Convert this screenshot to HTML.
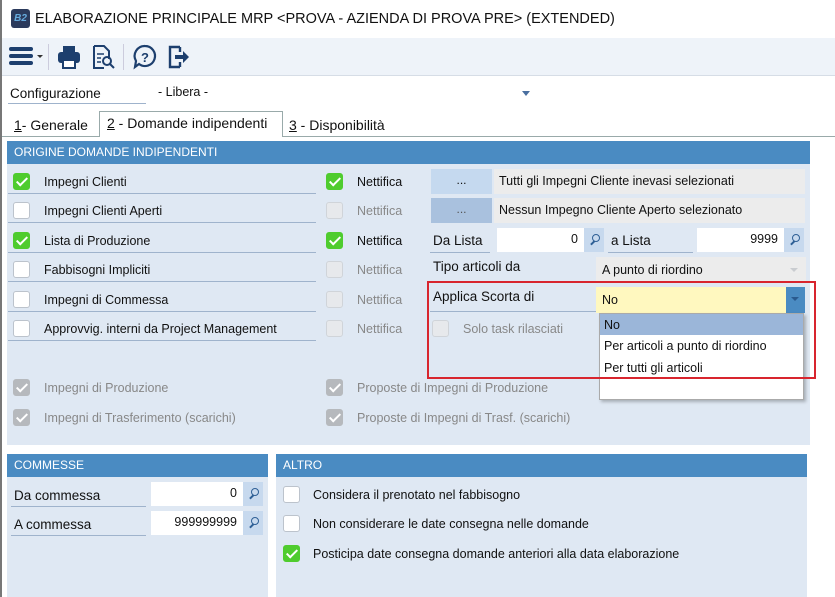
<!DOCTYPE html>
<html><head><meta charset="utf-8"><style>
*{box-sizing:border-box;margin:0;padding:0}
body{width:835px;height:597px;position:relative;background:#fff;font-family:"Liberation Sans",Arial,sans-serif;font-size:13px;color:#111;overflow:hidden}
.a{position:absolute}
.t{position:absolute;font-size:12.5px;white-space:nowrap}
.hdr{position:absolute;background:#4a8bc2;color:#fff;font-size:12px;padding:4px 7px;height:23px}
.pan{position:absolute;background:#dfe8f3}
.cb{position:absolute;width:17px;height:17px;border:1px solid #bcc3cc;border-radius:3px;background:#fff}
.cb.g{background:#e7e9ec;border-color:#d0d4d9}
.cb.on{background:#4fcc2e;border-color:#4fcc2e}
.cb.dis{background:#b6b9bd;border-color:#b6b9bd}
.cb.on::after,.cb.dis::after{content:"";position:absolute;left:5px;top:1px;width:4px;height:9px;border:solid #fff;border-width:0 2px 2px 0;transform:rotate(45deg)}
.ul{position:absolute;height:1px;background:#9fb3cc}
.gray{color:#888}
.fld{position:absolute;background:#fff;height:24px;text-align:right;padding:4px 6px;font-size:12.5px}
.mag{position:absolute;width:20px;height:24px;background:#c7d9ee}
.mag::after{content:"";position:absolute;left:8px;top:6px;width:6px;height:6px;border:1.5px solid #2e5f95;border-radius:50%}
.mag::before{content:"";position:absolute;left:6px;top:14px;width:5px;height:1.5px;background:#2e5f95;transform:rotate(-45deg)}
</style></head><body>
<div class="a" style="left:0;top:0;width:2px;height:597px;background:#777"></div>
<!-- title -->
<div class="a" style="left:11px;top:9px;width:19px;height:19px;background:#2b3a5c;border-radius:3px;color:#6ad;font-size:10px;font-weight:bold;font-style:italic;text-align:center;line-height:19px">B2</div>
<div class="t" style="left:35px;top:11px;font-size:14.5px">ELABORAZIONE PRINCIPALE MRP &lt;PROVA - AZIENDA DI PROVA PRE&gt; (EXTENDED)</div>
<!-- toolbar -->
<div class="a" style="left:2px;top:38px;width:833px;height:38px;background:#eef3f9;border-bottom:1px solid #d6dde6"></div>
<div class="a" style="left:9px;top:47px;width:24px;height:4px;background:#1d3f6e;border-radius:2px"></div>
<div class="a" style="left:9px;top:54px;width:24px;height:4px;background:#1d3f6e;border-radius:2px"></div>
<div class="a" style="left:9px;top:61px;width:24px;height:4px;background:#1d3f6e;border-radius:2px"></div>
<div class="a" style="left:37px;top:55px;border:3px solid transparent;border-top:3px solid #333"></div>
<div class="a" style="left:48px;top:44px;width:1px;height:26px;background:#ccd"></div>
<svg class="a" style="left:56px;top:44px" width="26" height="26" viewBox="0 0 26 26"><rect x="7" y="2" width="12" height="6" fill="#1d3f6e"/><rect x="2" y="8" width="22" height="11" rx="3" fill="#1d3f6e"/><rect x="7" y="16" width="12" height="8" fill="#fff" stroke="#1d3f6e" stroke-width="2"/></svg>
<svg class="a" style="left:90px;top:44px" width="26" height="26" viewBox="0 0 26 26"><path d="M4 2h10l5 5v8M4 2v22h10" fill="none" stroke="#1d3f6e" stroke-width="2"/><path d="M7 10h7M7 14h4M7 18h4" stroke="#1d3f6e" stroke-width="1.5"/><circle cx="17" cy="17" r="4" fill="none" stroke="#1d3f6e" stroke-width="2"/><path d="M20 20l4 4" stroke="#1d3f6e" stroke-width="2"/></svg>
<div class="a" style="left:123px;top:44px;width:1px;height:26px;background:#ccd"></div>
<svg class="a" style="left:131px;top:43px" width="28" height="28" viewBox="0 0 28 28"><path d="M14 3a10 10 0 1 1-6 18l-4 3 1-6A10 10 0 0 1 14 3z" fill="none" stroke="#1d3f6e" stroke-width="2.2"/><text x="14" y="19" font-size="13" font-weight="bold" text-anchor="middle" fill="#1d3f6e" font-family="Liberation Sans">?</text></svg>
<svg class="a" style="left:166px;top:44px" width="26" height="26" viewBox="0 0 26 26"><path d="M14 3H4v20h10M14 3v5M14 18v5" fill="none" stroke="#1d3f6e" stroke-width="2.4"/><path d="M9 11h8V7l6 6-6 6v-4H9z" fill="#1d3f6e"/></svg>
<!-- config -->
<div class="t" style="left:10px;top:86px;font-size:13.5px">Configurazione</div>
<div class="ul" style="left:8px;top:103px;width:138px"></div>
<div class="a" style="left:150px;top:80px;width:384px;height:25px;background:#fff"></div>
<div class="t" style="left:158px;top:85px">- Libera -</div>
<div class="a" style="left:522px;top:91px;border:4px solid transparent;border-top:5px solid #4a6fa0"></div>
<!-- tabs -->
<div class="a" style="left:2px;top:136px;width:833px;height:1px;background:#9aa"></div>
<div class="a" style="left:99px;top:111px;width:184px;height:26px;background:#fff;border:1px solid #9aa;border-bottom:none"></div>
<div class="t" style="left:14px;top:117px;font-size:14px"><u>1</u>- Generale</div>
<div class="t" style="left:107px;top:115px;font-size:14px"><u>2</u> - Domande indipendenti</div>
<div class="t" style="left:289px;top:117px;font-size:14px"><u>3</u> - Disponibilità</div>
<!-- origine panel -->
<div class="pan" style="left:7px;top:141px;width:803px;height:304px"></div>
<div class="hdr" style="left:7px;top:141px;width:803px">ORIGINE DOMANDE INDIPENDENTI</div>

<div class="cb on" style="left:13px;top:173px"></div><div class="t" style="left:44px;top:175px">Impegni Clienti</div><div class="ul" style="left:8px;top:193px;width:308px"></div>
<div class="cb" style="left:13px;top:202px"></div><div class="t" style="left:44px;top:204px">Impegni Clienti Aperti</div><div class="ul" style="left:8px;top:222px;width:308px"></div>
<div class="cb on" style="left:13px;top:232px"></div><div class="t" style="left:44px;top:234px">Lista di Produzione</div><div class="ul" style="left:8px;top:252px;width:308px"></div>
<div class="cb" style="left:13px;top:261px"></div><div class="t" style="left:44px;top:263px">Fabbisogni Impliciti</div><div class="ul" style="left:8px;top:281px;width:308px"></div>
<div class="cb" style="left:13px;top:291px"></div><div class="t" style="left:44px;top:293px">Impegni di Commessa</div><div class="ul" style="left:8px;top:311px;width:308px"></div>
<div class="cb" style="left:13px;top:320px"></div><div class="t" style="left:44px;top:322px">Approvvig. interni da Project Management</div><div class="ul" style="left:8px;top:340px;width:308px"></div>

<div class="cb on" style="left:326px;top:173px"></div><div class="t" style="left:357px;top:175px">Nettifica</div>
<div class="cb g" style="left:326px;top:202px"></div><div class="t gray" style="left:357px;top:204px">Nettifica</div>
<div class="cb on" style="left:326px;top:232px"></div><div class="t" style="left:357px;top:234px">Nettifica</div>
<div class="cb g" style="left:326px;top:261px"></div><div class="t gray" style="left:357px;top:263px">Nettifica</div>
<div class="cb g" style="left:326px;top:291px"></div><div class="t gray" style="left:357px;top:293px">Nettifica</div>
<div class="cb g" style="left:326px;top:320px"></div><div class="t gray" style="left:357px;top:322px">Nettifica</div>

<div class="a" style="left:431px;top:169px;width:61px;height:25px;background:#c5d9ef;text-align:center;font-size:12px;line-height:22px">...</div>
<div class="a" style="left:494px;top:169px;width:311px;height:25px;background:#ececec"></div>
<div class="t" style="left:499px;top:174px">Tutti gli Impegni Cliente inevasi selezionati</div>
<div class="a" style="left:431px;top:198px;width:61px;height:25px;background:#a9c1de;text-align:center;font-size:12px;line-height:22px;color:#555">...</div>
<div class="a" style="left:494px;top:198px;width:311px;height:25px;background:#ececec"></div>
<div class="t" style="left:499px;top:203px">Nessun Impegno Cliente Aperto selezionato</div>

<div class="t" style="left:433px;top:233px;font-size:13.5px">Da Lista</div><div class="ul" style="left:430px;top:252px;width:60px"></div>
<div class="fld" style="left:497px;top:228px;width:87px">0</div><div class="mag" style="left:584px;top:228px"></div>
<div class="t" style="left:611px;top:233px;font-size:13.5px">a Lista</div><div class="ul" style="left:608px;top:252px;width:85px"></div>
<div class="fld" style="left:697px;top:228px;width:87px">9999</div><div class="mag" style="left:784px;top:228px"></div>

<div class="t" style="left:433px;top:259px;font-size:13.5px">Tipo articoli da</div>
<div class="a" style="left:596px;top:257px;width:210px;height:25px;background:#ececec"></div>
<div class="t" style="left:602px;top:263px">A punto di riordino</div>
<div class="a" style="left:790px;top:268px;border:4px solid transparent;border-top:4px solid #c9ccd0"></div>

<div class="t" style="left:433px;top:289px;font-size:13.5px">Applica Scorta di</div><div class="ul" style="left:430px;top:311px;width:168px"></div>
<div class="a" style="left:596px;top:287px;width:190px;height:26px;background:#fff8bf"></div>
<div class="t" style="left:602px;top:293px">No</div>
<div class="a" style="left:786px;top:287px;width:19px;height:26px;background:#4a8bc2"></div>
<div class="a" style="left:791px;top:297px;border:4px solid transparent;border-top:4px solid #2a5a8e"></div>

<div class="cb g" style="left:432px;top:320px"></div><div class="t gray" style="left:463px;top:322px">Solo task rilasciati</div>

<div class="a" style="left:599px;top:313px;width:205px;height:87px;background:#fff;border:1px solid #aaa;box-shadow:2px 2px 3px rgba(0,0,0,.25)"></div>
<div class="a" style="left:600px;top:314px;width:203px;height:21px;background:#9bb6d9"></div>
<div class="t" style="left:604px;top:318px">No</div>
<div class="t" style="left:604px;top:339px">Per articoli a punto di riordino</div>
<div class="t" style="left:604px;top:361px">Per tutti gli articoli</div>
<div class="a" style="left:427px;top:281px;width:389px;height:98px;border:2px solid #d8252e"></div>

<div class="cb dis" style="left:13px;top:379px"></div><div class="t gray" style="left:44px;top:381px">Impegni di Produzione</div>
<div class="cb dis" style="left:13px;top:409px"></div><div class="t gray" style="left:44px;top:411px">Impegni di Trasferimento (scarichi)</div>
<div class="cb dis" style="left:326px;top:379px"></div><div class="t gray" style="left:357px;top:381px">Proposte di Impegni di Produzione</div>
<div class="cb dis" style="left:326px;top:409px"></div><div class="t gray" style="left:357px;top:411px">Proposte di Impegni di Trasf. (scarichi)</div>

<!-- commesse -->
<div class="pan" style="left:7px;top:454px;width:261px;height:143px"></div>
<div class="hdr" style="left:7px;top:454px;width:261px">COMMESSE</div>
<div class="t" style="left:14px;top:488px;font-size:13.5px">Da commessa</div><div class="ul" style="left:11px;top:506px;width:135px"></div>
<div class="fld" style="left:151px;top:482px;width:92px">0</div><div class="mag" style="left:243px;top:482px"></div>
<div class="t" style="left:14px;top:517px;font-size:13.5px">A commessa</div><div class="ul" style="left:11px;top:535px;width:135px"></div>
<div class="fld" style="left:151px;top:511px;width:92px">999999999</div><div class="mag" style="left:243px;top:511px"></div>
<!-- altro -->
<div class="pan" style="left:276px;top:454px;width:531px;height:143px"></div>
<div class="hdr" style="left:276px;top:454px;width:531px">ALTRO</div>
<div class="cb" style="left:283px;top:486px"></div><div class="t" style="left:313px;top:488px">Considera il prenotato nel fabbisogno</div>
<div class="cb" style="left:283px;top:515px"></div><div class="t" style="left:313px;top:517px">Non considerare le date consegna nelle domande</div>
<div class="cb on" style="left:283px;top:545px"></div><div class="t" style="left:313px;top:547px">Posticipa date consegna domande anteriori alla data elaborazione</div>
</body></html>
